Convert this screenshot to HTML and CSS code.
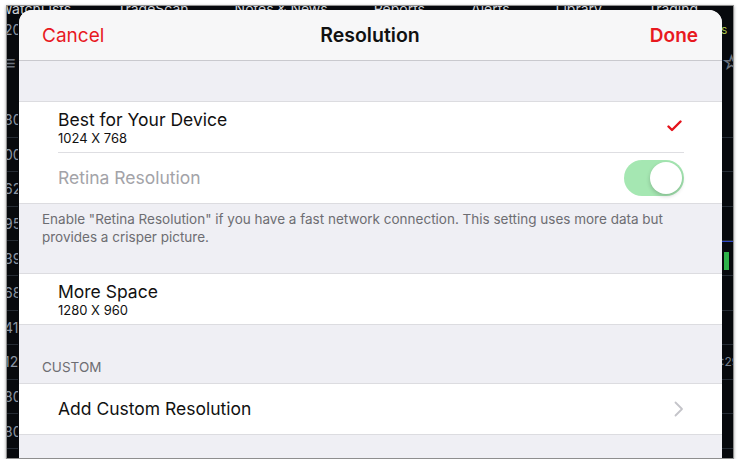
FILE: index.html
```html
<!DOCTYPE html>
<html lang="en">
  <head>
    <meta charset="UTF-8" />
    <title>Resolution</title>
    <link rel="stylesheet" href="styles.css">
  </head>
  <body>
    <div class="frame">
      <div class="app">
        <div class="tabs">
          <span class="tab">WatchLists</span>
          <span class="tab">TradeScan</span>
          <span class="tab">Notes &amp; News</span>
          <span class="tab">Reports</span>
          <span class="tab">Alerts</span>
          <span class="tab">Library</span>
          <span class="tab">Trading</span>
        </div>
        <div class="app-body">
          <div class="side side-left">
            <div class="side-top">20</div>
            <div class="side-menu">&#8801;</div>
            <div class="side-gap"></div>
            <div class="quote">80</div>
            <div class="quote">00</div>
            <div class="quote">62</div>
            <div class="quote">95</div>
            <div class="quote">39</div>
            <div class="quote">68</div>
            <div class="quote">41</div>
            <div class="quote">12</div>
            <div class="quote">80</div>
            <div class="quote">80</div>
          </div>
          <div class="side side-right">
            <div class="side-top green">s</div>
            <div class="side-menu">&#9734;</div>
            <div class="side-gap"></div>
            <div class="quote"></div>
            <div class="quote"></div>
            <div class="quote"></div>
            <div class="quote"></div>
            <div class="quote blue"><span class="bar"></span></div>
            <div class="quote"></div>
            <div class="quote"></div>
            <div class="quote">:29</div>
            <div class="quote"></div>
            <div class="quote"></div>
          </div>
        </div>
      </div>

      <div class="sheet">
        <div class="nav">
          <span class="nav-btn">Cancel</span>
          <span class="nav-title">Resolution</span>
          <span class="nav-btn nav-done">Done</span>
        </div>

        <div class="group group-first">
          <div class="cell">
            <div class="cell-text">
              <div class="cell-title">Best for Your Device</div>
              <div class="cell-sub">1024 X 768</div>
            </div>
            <svg class="check" width="15" height="12" viewBox="0 0 15 12">
              <path d="M1.5 6.5 L5 10 L13.5 1.5" fill="none" stroke="#e4121b" stroke-width="2.4" stroke-linecap="round" stroke-linejoin="round" />
            </svg>
          </div>
          <div class="cell">
            <div class="cell-text">
              <div class="cell-title dim">Retina Resolution</div>
            </div>
            <span class="toggle"><span class="knob"></span></span>
          </div>
        </div>
        <p class="group-note">
          Enable "Retina Resolution" if you have a fast network connection. This setting uses more data but provides a crisper picture.
        </p>

        <div class="group group-after-note">
          <div class="cell">
            <div class="cell-text">
              <div class="cell-title">More Space</div>
              <div class="cell-sub">1280 X 960</div>
            </div>
          </div>
        </div>

        <div class="group-head">CUSTOM</div>
        <div class="group group-tight">
          <div class="cell">
            <div class="cell-text">
              <div class="cell-title">Add Custom Resolution</div>
            </div>
            <svg class="chevron" width="10" height="16" viewBox="0 0 10 16">
              <path d="M1.5 1.5 L8 8 L1.5 14.5" fill="none" stroke="#c4c4c9" stroke-width="1.8" stroke-linecap="round" stroke-linejoin="round" />
            </svg>
          </div>
        </div>
      </div>
    </div>
  </body>
</html>
```

FILE: styles.css
```css
* {
  margin: 0;
  padding: 0;
  box-sizing: border-box;
}
body {
  background: #fff;
  font-family: Inter, "Liberation Sans", Arial, sans-serif;
  -webkit-font-smoothing: antialiased;
}
.frame {
  position: relative;
  margin: 5px 6px 0;
  height: 454px;
  border: 1px solid #8e8e8e;
  box-shadow: 0 1px 3px rgba(0, 0, 0, 0.35);
  background: #07090d;
  overflow: hidden;
}
.app {
  height: 100%;
  display: flex;
  flex-direction: column;
}
.tabs {
  display: flex;
  gap: 46px;
  height: 14px;
  margin: -6px 0 0 -8px;
  color: #cfd3d9;
  font-size: 14px;
  line-height: 18px;
  white-space: nowrap;
  overflow: hidden;
}
.app-body {
  flex: 1;
  display: flex;
  justify-content: space-between;
}
.side {
  width: 14px;
  display: flex;
  flex-direction: column;
  overflow: hidden;
  color: #8c95a2;
  font-size: 14px;
}
.side-left {
  margin-left: -3px;
}
.side-right {
  width: 12px;
  color: #7a838f;
  font-size: 12px;
}
.side-top {
  height: 31px;
  display: flex;
  align-items: center;
}
.side-top.green {
  color: #a6c24a;
}
.side-menu {
  height: 36px;
  display: flex;
  align-items: center;
  color: #6b727d;
  font-size: 20px;
}
.side-gap {
  height: 22px;
}
.quote {
  height: 34.6px;
  flex-shrink: 0;
  display: flex;
  align-items: center;
  border-bottom: 1px solid #262c35;
}
.quote.blue {
  border-top: 1px solid #2e47c8;
  align-items: flex-start;
  padding-left: 3px;
}
.bar {
  display: block;
  width: 5px;
  height: 18px;
  margin-top: 10px;
  background: #2fb34a;
}

/* sheet */
.sheet {
  position: absolute;
  top: 4px;
  left: 12px;
  right: 11px;
  bottom: 0;
  background: #efeff4;
  border-radius: 13px 13px 0 0;
  overflow: hidden;
}
.nav {
  height: 51px;
  display: flex;
  align-items: center;
  justify-content: space-between;
  padding: 0 24px 0 23px;
  background: #f7f7f8;
  border-bottom: 1px solid #c9c9ce;
}
.nav-btn {
  color: #e8191f;
  font-size: 19px;
  width: 80px;
}
.nav-done {
  font-weight: 600;
  text-align: right;
}
.nav-title {
  color: #111;
  font-size: 19.5px;
  font-weight: 600;
}
.group {
  background: #fff;
  border-top: 1px solid #dcdce0;
  border-bottom: 1px solid #dcdce0;
}
.group-first {
  margin-top: 40px;
}
.group-after-note {
  margin-top: 27px;
}
.group-tight {
  margin-top: 8px;
}
.cell {
  display: flex;
  align-items: center;
  justify-content: space-between;
  height: 51px;
  margin: 0 38px 0 39px;
  border-bottom: 1px solid #dedee2;
}
.cell:last-child {
  border-bottom: none;
  height: 50px;
}
.cell-title {
  color: #111;
  font-size: 17.5px;
  line-height: 22px;
}
.cell-title.dim {
  color: #a3a3a8;
}
.cell-sub {
  color: #111;
  font-size: 13px;
  line-height: 15px;
}
.check {
  margin-right: 2px;
  margin-top: -2px;
}
.toggle {
  position: relative;
  width: 60px;
  height: 36px;
  border-radius: 18px;
  background: #a5e7b2;
}
.knob {
  position: absolute;
  top: 2px;
  right: 2px;
  width: 32px;
  height: 32px;
  border-radius: 50%;
  background: #fff;
  box-shadow: 0 2px 4px rgba(0, 0, 0, 0.2);
}
.group-note {
  padding: 6px 23px 0;
  color: #6d6d72;
  font-size: 13.5px;
  line-height: 18px;
}
.group-head {
  margin-top: 34px;
  padding-left: 23px;
  color: #6d6d72;
  font-size: 13.5px;
  line-height: 16px;
}
```
